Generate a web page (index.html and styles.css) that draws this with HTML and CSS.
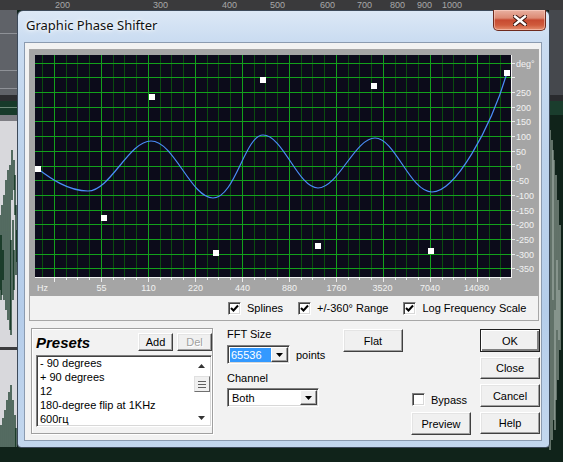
FILE: index.html
```html
<!DOCTYPE html>
<html lang="en">

<head>
	<meta charset="UTF-8">
	<meta name="viewport" content="width=device-width, initial-scale=1.0">
	<title>Graphic Phase Shifter</title>
	<link rel="stylesheet" href="styles.css">
</head>

<body>
	<div class="desk">
		<!-- editor behind the dialog -->
		<svg class="backdrop" width="563" height="462" viewBox="0 0 563 462">
			<rect width="563" height="462" fill="#10231a" />
			<rect width="563" height="10" fill="#3a3a3c" />
			<g fill="#a8a8a8" font-size="9" font-family="Liberation Sans, Arial, sans-serif">
				<text x="55" y="8">200</text>
				<text x="153" y="8">300</text>
				<text x="222" y="8">400</text>
				<text x="270" y="8">500</text>
				<text x="320" y="8">600</text>
				<text x="357" y="8">700</text>
				<text x="390" y="8">800</text>
				<text x="417" y="8">900</text>
				<text x="442" y="8">1000</text>
			</g>
			<rect x="0" y="10" width="17" height="85" fill="#5f6268" />
			<path d="M0 33.5H17M0 70.5H17M0 88.5H17" stroke="#8e9197" />
			<rect x="0" y="95" width="17" height="6" fill="#2c2d30" />
			<rect x="0" y="101" width="17" height="14" fill="#173a2a" />
			<path d="M0 107.5H17" stroke="#6d8a7a" />
			<rect x="0" y="115" width="17" height="6" fill="#7e7e84" />
			<rect x="0" y="121" width="17" height="226" fill="#d8d8dc" />
			<rect x="0" y="347" width="17" height="3" fill="#3c3c3e" />
			<rect x="0" y="350" width="17" height="97" fill="#d8d8dc" />
			<g stroke="#1c3d2b" stroke-width="1.4">
				<path d="M12 150V200M14 160V190M10 165V330M8 170V320M6 180V310M4 195V300M2 205V295M0 215V290M15 175V215M16 205V275M13 220V300M11 240V335M14 250V290M17 230V262M3 250V280M1 235V300" />
				<path d="M11 385V447M9 392V447M7 400V447M5 410V447M3 418V447M1 425V447M13 400V447M15 415V447M16 428V447" />
			</g>
			<rect x="549" y="10" width="14" height="85" fill="#45484d" />
			<rect x="549" y="95" width="14" height="6" fill="#2a2b2e" />
			<rect x="549" y="101" width="14" height="14" fill="#1a3d2d" />
			<g stroke="#86948c" stroke-width="1.4">
				<path d="M550 130V450M552 140V440M554 160V420M556 175V400M558 200V380M560 225V350M553 150V300M555 310V430M557 260V330M559 290V340" />
			</g>
		</svg>

		<div class="dlg">
			<div class="dlg__title">
				<span class="dlg__caption">Graphic Phase Shifter</span>
				<span class="dlg__close">
					<svg width="14" height="11" viewBox="0 0 14 11">
						<path d="M2 1.5L12 9.5M12 1.5L2 9.5" stroke="#3a1510" stroke-width="4.4" stroke-linecap="square" />
						<path d="M2 1.5L12 9.5M12 1.5L2 9.5" stroke="#fff" stroke-width="2.4" stroke-linecap="square" />
					</svg>
				</span>
			</div>

			<div class="dlg__client">
				<!-- phase graph -->
				<div class="scope">
					<svg class="scope__plot" width="508" height="246" viewBox="30 50 508 246">
						<rect x="30" y="50" width="508" height="246" fill="#a5a5a5" />
						<rect x="35" y="55" width="476" height="222" fill="#0c0b1a" />
						<g stroke="#0a4c0f">
							<path d="M42.5 55V277M66.5 55V277M77.5 55V277M89.5 55V277M113.5 55V277M124.5 55V277M136.5 55V277M160.5 55V277M171.5 55V277M183.5 55V277" />
							<path d="M207.5 55V277M218.5 55V277M230.5 55V277M254.5 55V277M265.5 55V277M277.5 55V277M301.5 55V277M312.5 55V277M324.5 55V277" />
							<path d="M348.5 55V277M359.5 55V277M371.5 55V277M395.5 55V277M406.5 55V277M418.5 55V277M442.5 55V277M453.5 55V277M465.5 55V277M489.5 55V277M500.5 55V277" />
						</g>
						<g stroke="#13a11c">
							<path d="M54.5 55V277M101.5 55V277M148.5 55V277M195.5 55V277M242.5 55V277M289.5 55V277M336.5 55V277M383.5 55V277M430.5 55V277M477.5 55V277" />
							<path d="M35 63.5H511M35 77.5H511M35 92.5H511M35 107.5H511M35 121.5H511M35 136.5H511M35 151.5H511M35 166.5H511M35 180.5H511M35 195.5H511M35 210.5H511M35 224.5H511M35 239.5H511M35 254.5H511M35 268.5H511" />
						</g>
						<path d="M511.5 55V278M35 277.5H512" stroke="#f4f4f4" />
						<g stroke="#ececec">
							<path d="M512 63.5H515M512 77.5H515M512 92.5H515M512 107.5H515M512 121.5H515M512 136.5H515M512 151.5H515M512 166.5H515M512 180.5H515M512 195.5H515M512 210.5H515M512 224.5H515M512 239.5H515M512 254.5H515M512 268.5H515" />
							<path d="M54.5 278V282M101.5 278V282M148.5 278V282M195.5 278V282M242.5 278V282M289.5 278V282M336.5 278V282M383.5 278V282M430.5 278V282M477.5 278V282" />
							<path d="M66.5 278V280M77.5 278V280M89.5 278V280M113.5 278V280M124.5 278V280M136.5 278V280M160.5 278V280M171.5 278V280M183.5 278V280M207.5 278V280M218.5 278V280M230.5 278V280M254.5 278V280M265.5 278V280M277.5 278V280M301.5 278V280M312.5 278V280M324.5 278V280M348.5 278V280M359.5 278V280M371.5 278V280M395.5 278V280M406.5 278V280M418.5 278V280M442.5 278V280M453.5 278V280M465.5 278V280M489.5 278V280M500.5 278V280" />
						</g>
						<g class="scope__lbl">
							<text x="516" y="66.5">deg°</text>
							<text x="516" y="95.5">250</text>
							<text x="516" y="110.5">200</text>
							<text x="516" y="124.5">150</text>
							<text x="516" y="139.5">100</text>
							<text x="516" y="154.5">50</text>
							<text x="516" y="169.5">0</text>
							<text x="516" y="183.5">-50</text>
							<text x="516" y="198.5">-100</text>
							<text x="516" y="213.5">-150</text>
							<text x="516" y="227.5">-200</text>
							<text x="516" y="242.5">-250</text>
							<text x="516" y="257.5">-300</text>
							<text x="516" y="271.5">-350</text>
						</g>
						<g class="scope__lbl scope__lbl--mid">
							<text x="101.5" y="290.5">55</text>
							<text x="148.5" y="290.5">110</text>
							<text x="195.5" y="290.5">220</text>
							<text x="242.5" y="290.5">440</text>
							<text x="289.5" y="290.5">880</text>
							<text x="336.5" y="290.5">1760</text>
							<text x="382.5" y="290.5">3520</text>
							<text x="430" y="290.5">7040</text>
							<text x="476.5" y="290.5">14080</text>
						</g>
						<text class="scope__lbl" x="37" y="290.5">Hz</text>
						<path fill="none" stroke="#4b8df8" stroke-width="1.2" d="M38,169 C50,178 68,191 88,191 C110,191 129,141 151,141 C174,141 191,198 213,198 C235,198 245,135 263,135 C283,135 298,188 318,188 C338,188 355,138 375,138 C395,138 410,192 432,192 C455,192 490,130 507,73" />
						<g fill="#fff">
							<rect x="35" y="166" width="6" height="6" />
							<rect x="101" y="215" width="6" height="6" />
							<rect x="149" y="94" width="6" height="6" />
							<rect x="213" y="250" width="6" height="6" />
							<rect x="260" y="77" width="6" height="6" />
							<rect x="315" y="243" width="6" height="6" />
							<rect x="371" y="83" width="6" height="6" />
							<rect x="428" y="248" width="6" height="6" />
							<rect x="504" y="70" width="6" height="6" />
						</g>
					</svg>
					<div class="scope__opts">
						<span class="opt"><span class="chk"><svg width="11" height="11" viewBox="0 0 11 11"><path d="M2 5L4.5 7.5L9 2.5" fill="none" stroke="#000" stroke-width="2" /></svg></span>Splines</span>
						<span class="opt"><span class="chk"><svg width="11" height="11" viewBox="0 0 11 11"><path d="M2 5L4.5 7.5L9 2.5" fill="none" stroke="#000" stroke-width="2" /></svg></span>+/-360° Range</span>
						<span class="opt"><span class="chk"><svg width="11" height="11" viewBox="0 0 11 11"><path d="M2 5L4.5 7.5L9 2.5" fill="none" stroke="#000" stroke-width="2" /></svg></span>Log Frequency Scale</span>
					</div>
				</div>

				<div class="lower">
					<!-- presets -->
					<div class="presets">
						<div class="presets__head">
							<span class="presets__title">Presets</span>
							<span class="btn btn--add">Add</span>
							<span class="btn btn--del">Del</span>
						</div>
						<div class="list">
							<div class="list__items">
								<div>- 90 degrees</div>
								<div>+ 90 degrees</div>
								<div>12</div>
								<div>180-degree flip at 1KHz</div>
								<div>600гц</div>
							</div>
							<div class="scroll">
								<span class="scroll__arrow"><svg width="7" height="4" viewBox="0 0 7 4"><path d="M3.5 0L7 4H0Z" /></svg></span>
								<span class="scroll__thumb"><i></i><i></i><i></i></span>
								<span class="scroll__fill"></span>
								<span class="scroll__arrow"><svg width="7" height="4" viewBox="0 0 7 4"><path d="M0 0H7L3.5 4Z" /></svg></span>
							</div>
						</div>
					</div>

					<!-- fft size / channel -->
					<div class="fft">
						<div class="fft__label">FFT Size</div>
						<div class="fft__row">
							<span class="combo combo--size">
								<span class="combo__value"><span class="combo__sel">65536</span></span>
								<span class="combo__btn"><svg width="7" height="4" viewBox="0 0 7 4"><path d="M0 0H7L3.5 4Z" /></svg></span>
							</span>
							<span class="fft__unit">points</span>
						</div>
						<div class="fft__label fft__label--chan">Channel</div>
						<span class="combo combo--chan">
							<span class="combo__value">Both</span>
							<span class="combo__btn"><svg width="7" height="4" viewBox="0 0 7 4"><path d="M0 0H7L3.5 4Z" /></svg></span>
						</span>
					</div>

					<div class="mid">
						<span class="btn btn--flat">Flat</span>
						<span class="opt opt--bypass"><span class="chk"></span>Bypass</span>
						<span class="btn btn--preview">Preview</span>
					</div>

					<div class="cmds">
						<span class="btn btn--def">OK</span>
						<span class="btn btn--close">Close</span>
						<span class="btn btn--cancel">Cancel</span>
						<span class="btn btn--help">Help</span>
					</div>
				</div>
			</div>
		</div>
	</div>
</body>

</html>
```

FILE: styles.css
```css
* {
	margin: 0;
	padding: 0;
	box-sizing: border-box;
}

body {
	width: 563px;
	height: 462px;
	overflow: hidden;
	background: #10231a;
	font: 11px "Liberation Sans", Arial, sans-serif;
	color: #000;
}

.desk {
	position: relative;
	width: 563px;
	height: 462px;
}

.backdrop {
	position: absolute;
	left: 0;
	top: 0;
	display: block;
}

/* window frame */
.dlg {
	position: absolute;
	left: 17px;
	top: 10px;
	width: 533px;
	height: 438px;
	padding: 0 7px 6px 6px;
	border: 1px solid #3d4a5a;
	border-radius: 6px 6px 4px 4px;
	background: linear-gradient(180deg, #dce8f6 0, #cadcf1 30px, #bdd3ec 140px, #b5cdea 300px, #c3d7ee 100%);
}

.dlg__title {
	position: relative;
	height: 31px;
	padding: 6px 0 0 2px;
	font: 13px "Noto Sans", "Liberation Sans", sans-serif;
	line-height: 16px;
	color: #101010;
}

.dlg__caption {
	text-shadow: 0 0 6px #fff, 0 0 3px #fff;
}

.dlg__close {
	position: absolute;
	top: -1px;
	right: -4px;
	width: 53px;
	height: 21px;
	display: flex;
	align-items: center;
	justify-content: center;
	border: 1px solid #6e2a1e;
	border-top: none;
	border-radius: 0 0 5px 5px;
	background: linear-gradient(180deg, #e9b1a2 0, #dc8a74 40%, #c74a31 50%, #cf5a3c 75%, #e58f70 100%);
	box-shadow: inset 0 0 0 1px rgba(255, 220, 210, .5);
}

.dlg__close svg {
	display: block;
}

.dlg__client {
	width: 518px;
	height: 399px;
	border: 1px solid #8b9bb0;
	background: #f2f2f2;
}

/* graph */
.scope {
	width: 510px;
	margin: 6px 0 0 4px;
	border: 1px solid #a7a7a7;
}

.scope__plot {
	display: block;
}

.scope__lbl {
	font: 9px "Liberation Sans", Arial, sans-serif;
	fill: #f2f2f2;
}

.scope__lbl--mid {
	text-anchor: middle;
}

.scope__opts {
	display: flex;
	align-items: center;
	gap: 15px;
	height: 24px;
	padding-left: 198px;
}

.opt {
	display: flex;
	align-items: center;
	white-space: nowrap;
}

.chk {
	width: 13px;
	height: 13px;
	margin-right: 6px;
	background: #fff;
	border: 1px solid;
	border-color: #808080 #fff #fff #808080;
	box-shadow: inset 1px 1px 0 #404040, inset -1px -1px 0 #d8d8d8;
	display: flex;
	align-items: center;
	justify-content: center;
}

.chk svg {
	display: block;
}

/* bottom half */
.lower {
	display: flex;
	align-items: flex-start;
	margin-top: 7px;
	padding-left: 6px;
}

.btn {
	display: flex;
	align-items: center;
	justify-content: center;
	height: 23px;
	background: #f0f0f0;
	border: 1px solid;
	border-color: #fff #404040 #404040 #fff;
	box-shadow: inset -1px -1px 0 #a0a0a0, inset 1px 1px 0 #e4e4e4;
	white-space: nowrap;
}

.btn--def {
	border-color: #202020;
	box-shadow: inset 1px 1px 0 #fff, inset -2px -2px 0 #808080;
}

.presets {
	width: 182px;
	height: 106px;
	padding: 4px 0 0 4px;
	border: 1px solid #a0a0a0;
	box-shadow: inset 1px 1px 0 #fff, 1px 1px 0 #fff;
}

.presets__head {
	display: flex;
	align-items: center;
	height: 18px;
}

.presets__title {
	flex: 1;
	font: italic bold 15px "Liberation Sans", Arial, sans-serif;
}

.presets .btn {
	height: 18px;
	width: 35px;
}

.btn--add {
	margin-right: 4px;
}

.btn--del {
	color: #a0a0a0;
	text-shadow: 1px 1px 0 #fff;
}

.list {
	display: flex;
	width: 176px;
	height: 72px;
	margin-top: 4px;
	background: #fff;
	border: 1px solid;
	border-color: #808080 #fff #fff #808080;
	box-shadow: inset 1px 1px 0 #404040, inset -1px -1px 0 #d8d8d8;
	padding: 0 1px;
}

.list__items {
	flex: 1;
	padding-left: 2px;
	line-height: 14px;
	white-space: nowrap;
	overflow: hidden;
}

.scroll {
	width: 17px;
	display: flex;
	flex-direction: column;
	align-items: center;
	padding-top: 1px;
}

.scroll__arrow {
	height: 17px;
	display: flex;
	align-items: center;
	justify-content: center;
}

.scroll__arrow svg {
	display: block;
	fill: #333;
}

.scroll__thumb {
	width: 16px;
	height: 16px;
	margin-top: 2px;
	background: #f0f0f0;
	border: 1px solid;
	border-color: #e0e0e0 #707070 #707070 #e0e0e0;
	display: flex;
	flex-direction: column;
	justify-content: center;
	align-items: center;
	gap: 2px;
}

.scroll__thumb i {
	display: block;
	width: 8px;
	height: 1px;
	background: #606060;
}

.scroll__fill {
	flex: 1;
}

.fft {
	width: 94px;
	margin-left: 14px;
}

.fft__label {
	line-height: 13px;
}

.fft__label--chan {
	margin-top: 8px;
}

.fft__row {
	display: flex;
	align-items: center;
	margin-top: 4px;
	width: 120px;
}

.fft__unit {
	margin-left: 6px;
}

.combo {
	display: flex;
	height: 19px;
	background: #fff;
	border: 1px solid;
	border-color: #808080 #fff #fff #808080;
	box-shadow: inset 1px 1px 0 #404040, inset -1px -1px 0 #d8d8d8;
	padding: 1px;
}

.combo--size {
	width: 63px;
}

.combo--chan {
	width: 92px;
	margin-top: 3px;
}

.combo__value {
	flex: 1;
	display: flex;
	align-items: center;
	padding-left: 1px;
}

.combo--chan .combo__value {
	padding-left: 3px;
}

.combo__sel {
	background: #3399ff;
	color: #fff;
	padding: 1px 1px;
	width: 41px;
}

.combo__btn {
	width: 17px;
	display: flex;
	align-items: center;
	justify-content: center;
	background: #f0f0f0;
	border: 1px solid;
	border-color: #fff #404040 #404040 #fff;
	box-shadow: inset -1px -1px 0 #a0a0a0;
}

.combo__btn svg {
	display: block;
}

.mid {
	display: flex;
	flex-direction: column;
	width: 128px;
	margin-left: 22px;
}

.btn--flat {
	width: 60px;
	margin-top: 1px;
}

.opt--bypass {
	margin: 41px 0 0 69px;
	height: 13px;
}

.btn--preview {
	width: 60px;
	margin: 6px 0 0 68px;
}

.cmds {
	display: flex;
	flex-direction: column;
	width: 60px;
	margin-left: 9px;
}

.cmds .btn {
	margin-top: 5px;
}

.cmds .btn--def {
	margin-top: 1px;
}

.btn--close,
.btn--help {
	height: 22px;
}
```
